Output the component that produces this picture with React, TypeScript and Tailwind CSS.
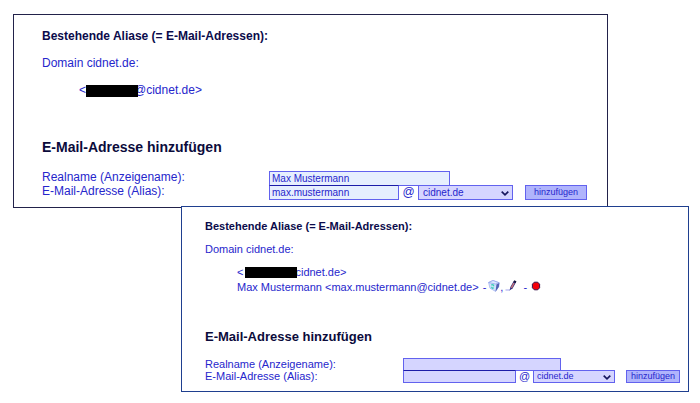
/**
 * Alias administration: the list of existing aliases and the form for adding
 * a new address, shown before and after an alias has been created.
 */
import { useId } from 'react'
import type { ReactNode } from 'react'
import clsx from 'clsx'

type Size = 'large' | 'small'

function Section({ size, children }: { size: Size; children: ReactNode }) {
  return (
    <section
      className={clsx(
        'border bg-white text-[#2626cc]',
        size === 'large'
          ? 'ml-[13px] mr-[92px] border-[#22224a] pb-[7px] pl-7 pt-[14px] text-[12px] leading-[15px]'
          : 'relative -mt-0.5 ml-[181px] mr-[11px] border-[#1f3f8f] pb-2 pl-[23px] pt-3 text-[11px] leading-[15px]'
      )}
    >
      {children}
    </section>
  )
}

/** Blacked-out part of an address. */
function Redacted({ className }: { className: string }) {
  return <span className={clsx('relative z-10 w-[52px] shrink-0 bg-black', className)} />
}

function BinIcon() {
  return (
    <svg viewBox="0 0 12 12" className="h-3 w-3">
      <path d="M.6 2.5 L5 .5 L11.2 2.8 L10.8 6.5 L7.6 11.4 L2 8.2 Z" fill="#cfe2fb" stroke="#9cabee" strokeWidth=".7" />
      <path d="M.6 2.5 L5 .5 L11.2 2.8 L7.4 4 Z" fill="#dcebff" stroke="#8f9ce8" strokeWidth=".7" />
      <path d="M8.4 4.6 L11.3 3 L10.8 7 L7.6 11.4 Z" fill="#5262b4" />
      <path d="M3.2 4.8 L5 4.6 L6 6.2 M5.8 7.8 L4.4 8.2 L3.4 7" fill="none" stroke="#3bd0b8" strokeWidth="1.2" />
    </svg>
  )
}

function PencilIcon() {
  return (
    <svg viewBox="0 0 12 12" className="h-3 w-3">
      <path d="M.5 10 H5" stroke="#a3a5ef" strokeWidth="1" />
      <path d="M4.6 10.4 L5.4 7 L8.6 1.2 L11 2.2 L7.7 8.3 Z" fill="#2c2a78" />
      <path d="M6.4 7.8 L9 3" stroke="#c9767c" strokeWidth="1.5" />
      <path d="M8.8 1.1 L11.1 2.1" stroke="#17173c" strokeWidth="1.8" />
    </svg>
  )
}

function DotIcon() {
  return (
    <svg viewBox="0 0 10 10" className="h-[10px] w-[10px]">
      <path d="M3.3 1.2 H6.7 L8.6 3.2 V6.8 L6.7 8.8 H3.3 L1.4 6.8 V3.2 Z" fill="#f40009" stroke="#351047" strokeWidth="1" />
    </svg>
  )
}

function AliasActions() {
  return (
    <span className="ml-1 flex items-center">
      <span>-</span>
      <button type="button" aria-label="Löschen" className="-mt-1 ml-0.5">
        <BinIcon />
      </button>
      <span>,</span>
      <button type="button" aria-label="Bearbeiten" className="-mt-1 ml-0.5">
        <PencilIcon />
      </button>
      <span className="ml-1.5">-</span>
      <button type="button" aria-label="Status" className="-mt-1 ml-1">
        <DotIcon />
      </button>
    </span>
  )
}

function AddressForm({
  size,
  name,
  alias
}: {
  size: Size
  name: string
  alias: string
}) {
  const id = useId()
  const large = size === 'large'
  const field = large
    ? 'h-[15px] bg-[#e6effe] px-0.5 text-[10px]'
    : 'h-[13px] bg-[#d5d5ff] px-0.5 text-[9px]'
  const label = large ? 'w-[227px] leading-[12px]' : 'w-[198px] leading-[13px]'

  return (
    <form onSubmit={(e) => e.preventDefault()}>
      <div className="flex items-start">
        <label htmlFor={`${id}-name`} className={clsx('shrink-0', label)}>
          Realname (Anzeigename):
        </label>
        <input
          id={`${id}-name`}
          defaultValue={name}
          className={clsx('border border-[#6262ee] outline-none', field, large ? 'w-[181px]' : 'w-[158px]')}
        />
      </div>
      <div className="-mt-px flex items-start">
        <label htmlFor={`${id}-alias`} className={clsx('shrink-0', label)}>
          E-Mail-Adresse (Alias):
        </label>
        <input
          id={`${id}-alias`}
          defaultValue={alias}
          className={clsx(
            'border border-[#6262ee] border-t-[#1c1ca8] outline-none',
            field,
            large ? 'w-[130px]' : 'w-[113px]'
          )}
        />
        <span className={clsx('text-center', large ? 'w-[19px] leading-[14px]' : 'w-[17px] leading-[13px]')}>@</span>
        <div className={clsx('relative', large ? 'w-[95px]' : 'w-[82px]')}>
          <select
            aria-label="Domain"
            className={clsx(
              'block w-full appearance-none border border-[#6262ee] bg-[#d5d5ff] outline-none',
              large ? 'h-[15px] pl-1 text-[10px] leading-[13px]' : 'h-[13px] pl-[3px] text-[9px] leading-[11px]'
            )}
          >
            <option>cidnet.de</option>
          </select>
          <svg
            viewBox="0 0 8 5"
            className={clsx('pointer-events-none absolute w-2', large ? 'right-1 top-[6px]' : 'right-1 top-[5px]')}
          >
            <path d="M.7 .7 L4 3.8 L7.3 .7" fill="none" stroke="#16165e" strokeWidth="1.7" />
          </svg>
        </div>
        <button
          type="submit"
          className={clsx(
            'border border-[#6262ee] bg-[#b0b4fc] text-[9px]',
            large ? 'ml-3 h-[15px] w-[62px] leading-[13px]' : 'ml-[11px] h-[13px] w-[54px] leading-[11px]'
          )}
        >
          hinzufügen
        </button>
      </div>
    </form>
  )
}

export default function App() {
  return (
    <main className="bg-white pt-[14px] font-['Liberation_Sans',Arial,sans-serif]">
      <Section size="large">
        <h2 className="font-bold text-[#0b0b4b]">Bestehende Aliase (= E-Mail-Adressen):</h2>
        <p className="mt-3">Domain cidnet.de:</p>
        <ul className="mt-3 pl-[37px]">
          <li className="flex items-center">
            &lt;
            <Redacted className="h-3" />
            <span className="-ml-1">@cidnet.de&gt;</span>
          </li>
        </ul>
        <h1 className="mt-10 text-[14px] leading-[18px] font-bold text-[#0b0b3b]">E-Mail-Adresse hinzufügen</h1>
        <div className="mt-[15px]">
          <AddressForm size="large" name="Max Mustermann" alias="max.mustermann" />
        </div>
      </Section>

      <Section size="small">
        <h2 className="font-bold text-[#0b0b4b]">Bestehende Aliase (= E-Mail-Adressen):</h2>
        <p className="mt-2">Domain cidnet.de:</p>
        <ul className="mt-2 pl-8">
          <li className="flex items-center">
            &lt;
            <Redacted className="ml-0.5 h-[11px]" />
            <span className="-ml-0.5">cidnet.de&gt;</span>
          </li>
          <li className="flex items-center">
            Max Mustermann &lt;max.mustermann@cidnet.de&gt;
            <AliasActions />
          </li>
        </ul>
        <h1 className="mt-[33px] text-[13px] leading-[18px] font-bold text-[#0b0b3b]">E-Mail-Adresse hinzufügen</h1>
        <div className="mt-3">
          <AddressForm size="small" name="" alias="" />
        </div>
      </Section>
    </main>
  )
}
